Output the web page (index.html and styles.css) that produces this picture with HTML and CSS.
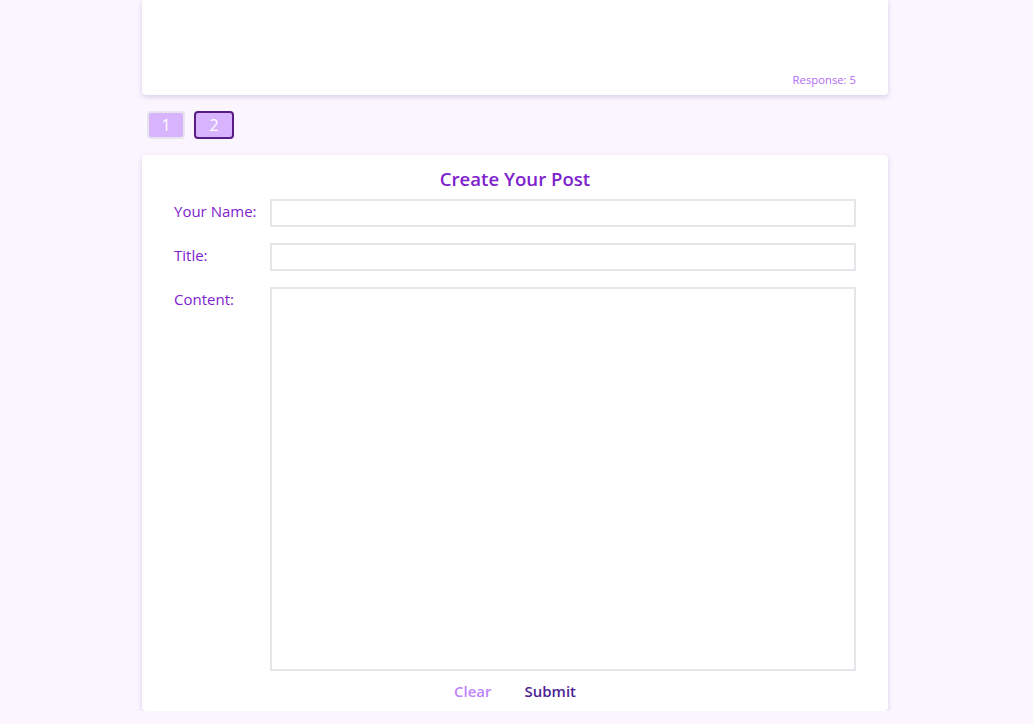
FILE: index.html
```html
<!DOCTYPE html>
<html>
<head>
<meta charset="utf-8">
<link rel="stylesheet" href="styles.css">
</head>
<body>
<div class="page">
  <div class="card card-top">
    <div class="response">Response: 5</div>
  </div>
  <div class="pager">
    <button class="page-btn">1</button>
    <button class="page-btn active">2</button>
  </div>
  <div class="card card-form">
    <h2 class="form-title">Create Your Post</h2>
    <div class="row">
      <label class="label">Your Name:</label>
      <input class="field" type="text">
    </div>
    <div class="row">
      <label class="label">Title:</label>
      <input class="field" type="text">
    </div>
    <div class="row">
      <label class="label">Content:</label>
      <textarea class="field area"></textarea>
    </div>
    <div class="actions">
      <button class="act clear">Clear</button>
      <button class="act submit">Submit</button>
    </div>
  </div>
</div>
</body>
</html>
```

FILE: styles.css
```css
html, body {
  margin: 0;
  padding: 0;
  background: #faf5ff;
  font-family: "Open Sans", "Noto Sans", sans-serif;
}
.page {
  width: 746px;
  margin-left: 142px;
}
.card {
  background: #fff;
  border-radius: 0 0 4px 4px;
  box-shadow: 0 2px 5px rgba(80, 40, 110, 0.18);
}
.card-top {
  height: 95px;
  display: flex;
  align-items: flex-end;
  justify-content: flex-end;
  padding: 0 32px;
  box-sizing: border-box;
}
.response {
  font-size: 11.3px;
  color: #b36bf5;
  line-height: 16px;
  margin-bottom: 7px;
}
.pager {
  display: flex;
  gap: 9px;
  padding: 16px 5px;
}
.page-btn {
  width: 38px;
  height: 28px;
  box-sizing: border-box;
  background: #d8b4fe;
  border: 2px solid #e5e5ea;
  border-radius: 4px;
  color: #fff;
  font-family: inherit;
  font-size: 16px;
  line-height: 22px;
  padding: 0;
}
.page-btn.active {
  width: 40px;
  border-color: #581c87;
}
.card-form {
  border-radius: 4px;
  padding: 10px 32px 4px;
  display: flex;
  flex-direction: column;
  gap: 16px;
}
.form-title {
  margin: 0 0 -10px;
  text-align: center;
  font-size: 18.6px;
  font-weight: 600;
  line-height: 28px;
  color: #7e22ce;
}
.row {
  display: flex;
  align-items: flex-start;
}
.label {
  width: 96px;
  flex: none;
  font-size: 15px;
  line-height: 24px;
  padding-top: 0;
  color: #7e22ce;
}
.field {
  flex: 1;
  height: 28px;
  box-sizing: border-box;
  border: 2px solid #e5e5ea;
  margin: 0;
  padding: 2px 6px;
  font-family: inherit;
  outline: none;
}
.area {
  height: 384px;
  resize: none;
}
.actions {
  display: flex;
  justify-content: center;
  gap: 33px;
  margin-top: -12px;
  height: 32px;
  align-items: center;
}
.act {
  background: none;
  border: none;
  padding: 0;
  font-family: inherit;
  font-size: 15px;
  font-weight: 600;
}
.clear { color: #c084fc; }
.submit { color: #4c1d95; }
```
